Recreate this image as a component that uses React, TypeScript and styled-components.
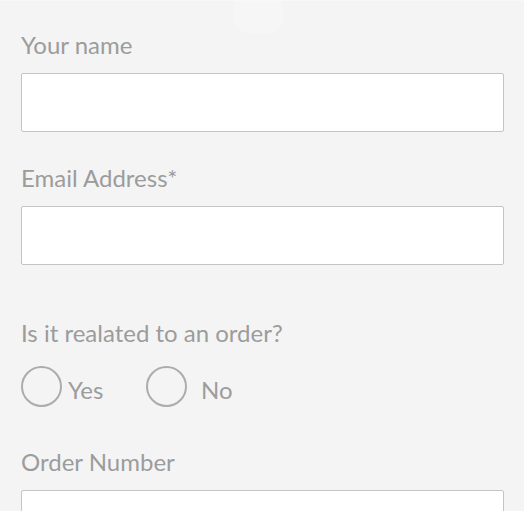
import React, { useState } from 'react'
import styled, { createGlobalStyle } from 'styled-components'

const GlobalStyle = createGlobalStyle`
  html, body {
    margin: 0;
    padding: 0;
    background: #f4f4f4;
  }
  body {
    font-family: Lato, 'Liberation Sans', sans-serif;
  }
`

type Field = { key: string; label: string }

const fieldsTop: Field[] = [
  { key: 'name', label: 'Your name' },
  { key: 'email', label: 'Email Address*' },
]

const App = () => {
  const [related, setRelated] = useState<'yes' | 'no' | null>(null)

  return (
    <>
      <GlobalStyle />
      <Page>
        <Handle />
        <Form>
          {fieldsTop.map(({ key, label }) => (
            <FieldGroup key={key}>
              <Label htmlFor={key}>{label}</Label>
              <Input id={key} type="text" />
            </FieldGroup>
          ))}
          <Question>
            <Label as="div">Is it realated to an order?</Label>
            <RadioRow>
              <RadioOption gap={6} width={125}>
                <RadioCircle
                  type="radio"
                  name="related"
                  checked={related === 'yes'}
                  onChange={() => setRelated('yes')}
                />
                <RadioText>Yes</RadioText>
              </RadioOption>
              <RadioOption gap={14}>
                <RadioCircle
                  type="radio"
                  name="related"
                  checked={related === 'no'}
                  onChange={() => setRelated('no')}
                />
                <RadioText>No</RadioText>
              </RadioOption>
            </RadioRow>
          </Question>
          <FieldGroup>
            <Label htmlFor="order">Order Number</Label>
            <Input id="order" type="text" />
          </FieldGroup>
        </Form>
      </Page>
    </>
  )
}

export default App

const Page = styled.div`
  position: relative;
  width: 524px;
  height: 511px;
  overflow: hidden;
  background: #f4f4f4;
  border-top: 1px solid #f8f8f8;
  box-sizing: border-box;
`

/* faint pull tab peeking in from the top */
const Handle = styled.div`
  position: absolute;
  top: 0;
  left: 233px;
  width: 50px;
  height: 33px;
  border-radius: 0 0 18px 18px;
  background: #f6f6f6;
`

const Form = styled.form`
  display: flex;
  flex-direction: column;
  padding: 29px 20px 0 21px;
`

const FieldGroup = styled.div`
  display: flex;
  flex-direction: column;
  gap: 13px;
  margin-bottom: 31px;
`

const Label = styled.label`
  font-size: 24px;
  line-height: 30px;
  color: #9c9c9c;
`

const Input = styled.input`
  box-sizing: border-box;
  width: 483px;
  height: 59px;
  margin: 0;
  border: 1px solid #c4c4c4;
  border-radius: 2px;
  background: #fff;
  outline: none;
`

const Question = styled.div`
  display: flex;
  flex-direction: column;
  gap: 18px;
  margin-top: 22px;
  margin-bottom: 40px;
`

const RadioRow = styled.div`
  display: flex;
  align-items: center;
`

const RadioOption = styled.label<{ gap: number; width?: number }>`
  display: flex;
  align-items: center;
  gap: ${({ gap }) => gap}px;
  width: ${({ width }) => (width ? `${width}px` : 'auto')};
  cursor: pointer;
`

const RadioCircle = styled.input`
  appearance: none;
  box-sizing: border-box;
  margin: 0;
  width: 41px;
  height: 41px;
  border-radius: 50%;
  border: 2px solid #acacac;
  background: transparent;
  cursor: pointer;
  &:checked {
    background: radial-gradient(circle, #9c9c9c 0 9px, transparent 10px);
  }
`

const RadioText = styled.span`
  padding-top: 7px;
  font-size: 24px;
  line-height: 30px;
  color: #9c9c9c;
`
